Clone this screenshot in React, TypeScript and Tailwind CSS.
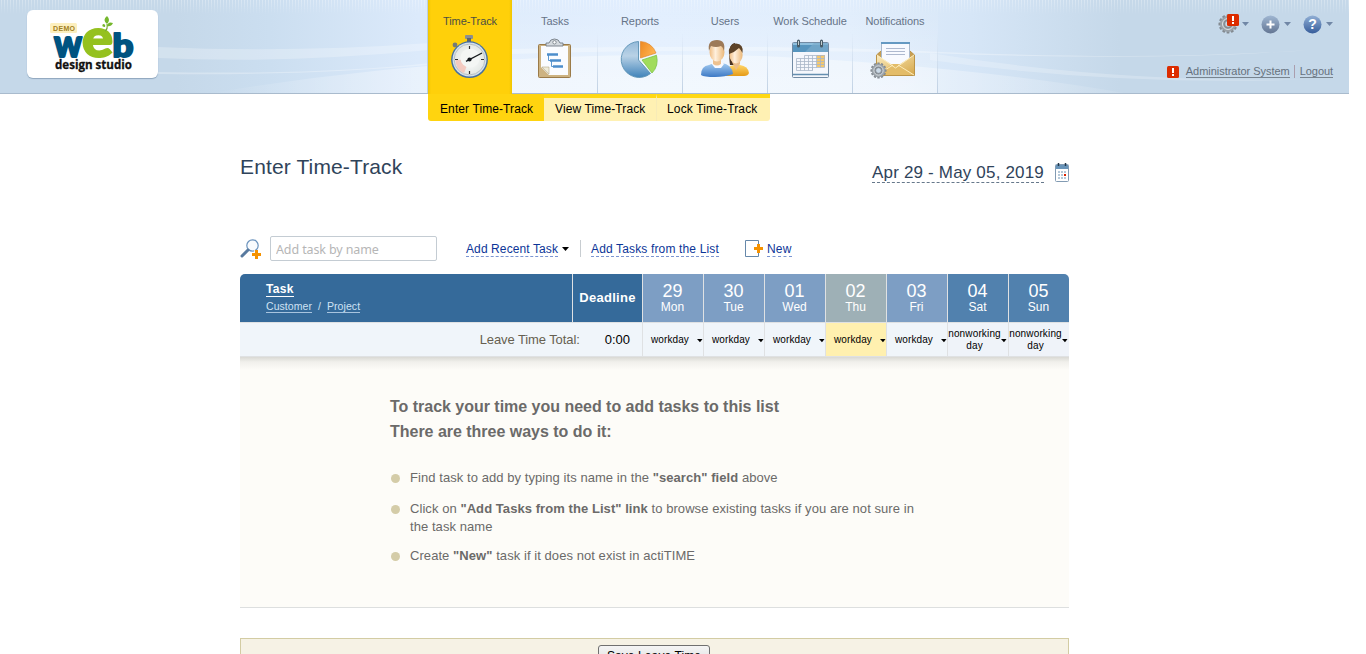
import React from "react";

function HeaderBackdrop() {
  return (
    <svg className="absolute inset-0 h-[94px] w-[1349px]" viewBox="0 0 1349 94" aria-hidden="true">
      <defs>
        <linearGradient id="sky">
          <stop offset="0" stopColor="#c5d8e9" />
          <stop offset="0.13" stopColor="#c5d8e9" />
          <stop offset="0.2" stopColor="#cbdef0" />
          <stop offset="0.31" stopColor="#dceafb" />
          <stop offset="0.48" stopColor="#e1eefe" />
          <stop offset="0.63" stopColor="#e0edfc" />
          <stop offset="0.72" stopColor="#d6e6f7" />
          <stop offset="0.83" stopColor="#c5d8e9" />
          <stop offset="1" stopColor="#c5d8e9" />
        </linearGradient>
        <linearGradient id="hill">
          <stop offset="0" stopColor="#fff" stopOpacity="0" />
          <stop offset="0.25" stopColor="#fff" stopOpacity="0.4" />
          <stop offset="0.75" stopColor="#fff" stopOpacity="0.4" />
          <stop offset="1" stopColor="#fff" stopOpacity="0.05" />
        </linearGradient>
        <linearGradient id="fadeDown" x2="0" y2="1">
          <stop offset="0" stopColor="#fff" stopOpacity="0.3" />
          <stop offset="1" stopColor="#fff" stopOpacity="0" />
        </linearGradient>
        <pattern id="pin" width="3" height="14" patternUnits="userSpaceOnUse">
          <rect x="1" width="1" height="14" fill="url(#fadeDown)" />
        </pattern>
      </defs>
      <rect width="1349" height="94" fill="url(#sky)" />
      <rect width="1349" height="14" fill="url(#pin)" />
      <path d="M158 47Q290 53 430 43V50Q280 64 158 58Z" fill="#fff" fillOpacity="0.25" />
      <path d="M158 72Q320 75 430 63V65Q300 76 158 74Z" fill="#fff" fillOpacity="0.28" />
      <path d="M205 94Q480 48 760 56Q970 66 1130 94Z" fill="url(#hill)" />
      <path d="M512 49Q720 44 900 50Q1140 62 1310 50Q1150 62 930 53Q700 48 512 54Z" fill="#fff" fillOpacity="0.3" />
      <path d="M930 53Q1120 84 1320 79Q1120 87 930 60Z" fill="#fff" fillOpacity="0.22" />
      <rect y="93" width="1349" height="1" fill="#a9bbcd" />
    </svg>
  );
}

function Logo() {
  return (
    <svg className="block overflow-visible" width="131" height="68" viewBox="27 10 131 68">
      <rect x="50" y="23" width="27" height="10" rx="1.5" fill="#fcefbe" />
      <text x="53" y="30.6" fontFamily="'Liberation Sans', Arial, sans-serif" fontWeight="700" fontSize="7" fill="#a18021" textLength="22">DEMO</text>
      <text x="54" y="57" fontFamily="Lato, sans-serif" fontWeight="900" fontSize="37" fill="#005380" stroke="#005380" strokeWidth="2" strokeLinejoin="round" textLength="28" lengthAdjust="spacingAndGlyphs">w</text>
      <text x="112.5" y="57" fontFamily="Lato, sans-serif" fontWeight="900" fontSize="33" fill="#005380" stroke="#005380" strokeWidth="2" strokeLinejoin="round" textLength="21" lengthAdjust="spacingAndGlyphs">b</text>
      <text x="82" y="57" fontFamily="Lato, sans-serif" fontWeight="900" fontSize="53" fill="#95c11f" stroke="#95c11f" strokeWidth="2" textLength="31" lengthAdjust="spacingAndGlyphs">e</text>
      <path d="M105 31Q108 29 107 24" fill="none" stroke="#78a934" strokeWidth="1.2" />
      <path d="M107 24Q102 20 107 16Q111 20 107 24M107 26Q108 21 113 23Q111 27 107 26M105 27Q101 27 103 24Q106 24 105 27" fill="#75b72c" />
      <text x="55" y="68.7" fontFamily="'Open Sans', sans-serif" fontWeight="700" fontSize="12" fill="#111" stroke="#111" strokeWidth="0.3" textLength="77" lengthAdjust="spacingAndGlyphs">design studio</text>
    </svg>
  );
}

function Stopwatch() {
  return (
    <svg width="48" height="48" viewBox="446 34 48 48">
      <defs>
        <radialGradient id="face"><stop offset="0" stopColor="#fff" /><stop offset="1" stopColor="#e4e8e5" /></radialGradient>
      </defs>
      <rect x="465" y="35" width="8" height="4" rx="1" fill="#8b8f91" />
      <rect x="467" y="38" width="4" height="5" fill="#606566" />
      <circle cx="455" cy="45" r="2.4" fill="#747a76" />
      <circle cx="469.5" cy="59.7" r="18.4" fill="#466f9e" />
      <circle cx="469.5" cy="59.5" r="17" fill="#d4e1ec" />
      <circle cx="469.5" cy="59.5" r="15.4" fill="url(#face)" stroke="#b9bfc3" />
      <path d="M469.5 59.5L455.5 60A14 14 0 0 0 464 73Z" fill="#f6bdb2" opacity="0.75" />
      <circle cx="470" cy="58" r="9.6" fill="#f4f6f4" />
      <path d="M469.5 46V49M469.5 71V74M455 59.5H458M481 59.5H484" stroke="#333" strokeWidth="1.2" />
      <path d="M466 61.4L482 53" stroke="#15191c" strokeWidth="1.3" />
      <circle cx="469.5" cy="59.5" r="2.1" fill="#15191c" />
    </svg>
  );
}

function Clipboard() {
  return (
    <svg width="48" height="48" viewBox="531 34 48 48">
      <rect x="538.5" y="44.5" width="32" height="33" rx="1" fill="#cdb382" stroke="#9b7b49" />
      <path d="M541 46H568V75H549L541 67Z" fill="#fafcff" />
      <path d="M542 67H549V74Z" fill="#efebd9" stroke="#a59a77" strokeWidth="0.5" />
      <path d="M546 46V43H549Q550 39 554.500 39Q559 39 560 43H563V46Z" fill="#d5dade" stroke="#737c84" strokeWidth="0.9" />
      <circle cx="554.5" cy="42.300" r="1.700" fill="#fff" stroke="#6d767d" strokeWidth="0.800" />
      <path d="M547 54.500H558M550 60.500H561M553 66.500H563" stroke="#4c8dcb" strokeWidth="2.500" />
      <path d="M548.500 55V60.500H550M551.500 60V66.500H553" fill="none" stroke="#4c8dcb" strokeWidth="0.900" />
    </svg>
  );
}

function PieChart() {
  return (
    <svg width="48" height="48" viewBox="616 34 48 48">
      <defs>
        <linearGradient id="pieBlue" x2="0" y2="1"><stop offset="0" stopColor="#93b9d9" /><stop offset="0.4" stopColor="#b9d2e6" /><stop offset="1" stopColor="#4083ba" /></linearGradient>
        <linearGradient id="pieOrange" x2="1" y2="0.5"><stop offset="0" stopColor="#ee8a22" /><stop offset="1" stopColor="#ffb450" /></linearGradient>
      </defs>
      <path d="M638.500 60V41.500A18 18 0 1 0 650.500 73.500Z" fill="url(#pieBlue)" stroke="#5b92b4" strokeWidth="0.900" />
      <path d="M640.500 58V41.500A17 17 0 0 1 656 53Z" fill="url(#pieOrange)" stroke="#e0872b" strokeWidth="0.700" />
      <path d="M642 60L656.500 55.300Q659 66 652 73Z" fill="#a1dc5c" stroke="#7cc345" strokeWidth="0.800" />
    </svg>
  );
}

function People() {
  return (
    <svg width="52" height="48" viewBox="699 34 52 48">
      <defs>
        <linearGradient id="shirt" x2="0" y2="1"><stop offset="0" stopColor="#a5cdf2" /><stop offset="1" stopColor="#3d79c5" /></linearGradient>
        <linearGradient id="gold" x2="0" y2="1"><stop offset="0" stopColor="#ffd56a" /><stop offset="1" stopColor="#e59a16" /></linearGradient>
        <linearGradient id="skin"><stop offset="0" stopColor="#f0bd82" /><stop offset="0.4" stopColor="#fff0dd" /><stop offset="1" stopColor="#eab778" /></linearGradient>
      </defs>
      <path d="M730 65Q727 44 735 43L738 65Z" fill="#493321" />
      <path d="M726 76V70Q728 66 734 65H740Q748 66 749 73Q748 76 744 76Z" fill="url(#gold)" />
      <path d="M732 62V60H740V64L736 70Z" fill="#e9bd8b" />
      <ellipse cx="736" cy="55" rx="6.600" ry="8.500" fill="url(#skin)" />
      <path d="M729 54Q728 44 736 43.500Q744 44 742.500 53Q741 50 739 48Q735 52 729 54" fill="#5d4328" />
      <path d="M701 75Q701 66 709 65L714 63H721Q732 64 733 74Q725 77 715 77Q704 77 701 75Z" fill="url(#shirt)" />
      <path d="M711 63L714 61H720L724 64L721 68H715Z" fill="#f8faff" />
      <path d="M713 58H721V64Q717 67 713 64Z" fill="#edc18f" />
      <ellipse cx="717" cy="52" rx="7.500" ry="9.500" fill="url(#skin)" />
      <path d="M709 51Q707 40 717 40Q726 40 724 51Q723 47 721 46Q716 48 711 46Z" fill="#9d7a58" />
    </svg>
  );
}

function ScheduleIcon() {
  return (
    <svg width="48" height="48" viewBox="786 34 48 48">
      <rect x="792.500" y="42.500" width="36" height="35" rx="1" fill="#f5f7fc" stroke="#728ba4" />
      <path d="M793 43H828V52H793Z" fill="#5795be" /><path d="M793 43H828V45H793Z" fill="#8fbfdd" />
      <path d="M805 52L814 43H828V52Z" fill="#7baccc" opacity="0.700" />
      <path d="M798.500 41V46M821.500 41V46" stroke="#475b66" strokeWidth="3" strokeLinecap="round" />
      <path d="M798.500 41V45M821.500 41V45" stroke="#c3ced2" />
      <path d="M817 55H825V67H817Z" fill="#f4c86e" />
      <path d="M804.500 55.500H824.500V67.500H812.500V70.500H796.500V58.500H824.500M796.500 61.500H824.500M796.500 64.500H824.500M796.500 67.500H812.500M800.500 58.500V70.500M804.500 55.500V70.500M808.500 55.500V70.500M812.500 55.500V70.500M816.500 55.500V67.500M820.500 55.500V67.500" fill="none" stroke="#aab6c8" strokeWidth="0.800" />
      <path d="M793 74.500H828" stroke="#648eb0" strokeWidth="1.500" />
    </svg>
  );
}

function Gear({ size }: { size: number }) {
  return (
    <svg width={size} height={size} viewBox="-10 -10 20 20">
      <g fill="#838a91">
        {[0, 30, 60, 90, 120, 150].map((angle) => (
          <rect key={angle} x="-1.400" y="-9.500" width="2.800" height="19" rx="0.500" transform={`rotate(${angle})`} />
        ))}
      </g>
      <circle r="6.200" fill="none" stroke="#9aa2a9" strokeWidth="3.500" />
      <circle r="5.500" fill="none" stroke="#dce1e5" strokeWidth="1" />
      <circle r="3.300" fill="#cbdae7" stroke="#7d858c" strokeWidth="0.800" />
    </svg>
  );
}

function EnvelopeIcon() {
  return (
    <span className="relative block h-[48px] w-[48px]">
      <svg width="48" height="48" viewBox="871 34 48 48">
        <defs><linearGradient id="paperGold" x2="1" y2="1"><stop offset="0" stopColor="#fbebbd" /><stop offset="1" stopColor="#d6a84b" /></linearGradient></defs>
        <path d="M876.500 55L881 51H910L914.500 55V75.500H876.500Z" fill="#c79e51" stroke="#bb9448" />
        <path d="M881.500 42.500H909.500V65H881.500Z" fill="#f8faff" stroke="#aab8ca" /><path d="M881 43H910" stroke="#6599c2" strokeWidth="2" />
        <path d="M886 48.500H905M886 51.500H905M886 54.500H905" stroke="#aeb9cf" />
        <path d="M877 55L895.500 67L914 55V75H877Z" fill="url(#paperGold)" />
        <path d="M877 75L892 64H899L914 75Z" fill="#e3bc69" /><path d="M877 55L895.500 68L914 55M877 75L893 65M914 75L898 65" fill="none" stroke="#fff0c4" strokeWidth="0.900" />
      </svg>
      <span className="absolute top-[28px] left-[-1px]"><Gear size={17} /></span>
    </span>
  );
}

const navItems = [
  { label: "Time-Track", icon: <Stopwatch />, active: true },
  { label: "Tasks", icon: <Clipboard /> },
  { label: "Reports", icon: <PieChart /> },
  { label: "Users", icon: <People /> },
  { label: "Work Schedule", icon: <ScheduleIcon /> },
  { label: "Notifications", icon: <EnvelopeIcon /> },
];

function Alert() {
  return (
    <svg className="block" width="12" height="12" viewBox="0 0 12 12">
      <rect width="12" height="12" rx="1.500" fill="#dc2c00" />
      <path d="M5 2H7V7H5ZM5 8H7V10H5Z" fill="#fff" />
    </svg>
  );
}

function Caret({ className = "" }: { className?: string }) {
  return <svg className={className} width="7" height="4" viewBox="0 0 7 4"><path d="M0 0H7L3.500 4Z" fill="currentColor" /></svg>;
}

function RoundIcon({ kind }: { kind: "plus" | "help" }) {
  return (
    <svg width="19" height="19" viewBox="0 0 19 19">
      <defs>
        <linearGradient id="roundplus" x2="0" y2="1"><stop stopColor="#9fb6d2" /><stop offset="1" stopColor="#637693" /></linearGradient>
        <linearGradient id="roundhelp" x2="0" y2="1"><stop stopColor="#91afd5" /><stop offset="1" stopColor="#365d9b" /></linearGradient>
      </defs>
      <circle cx="9.500" cy="9.500" r="9" fill={kind === "plus" ? "url(#roundplus)" : "url(#roundhelp)"} />
      {kind === "plus" ? (
        <path d="M5.500 9.500H13.500M9.500 5.500V13.500" stroke="#fff" strokeWidth="2" />
      ) : (
        <text x="9.500" y="14.300" textAnchor="middle" fill="#fff" fontFamily="'Liberation Sans', Arial, sans-serif" fontWeight="700" fontSize="14">?</text>
      )}
    </svg>
  );
}

function Header() {
  return (
    <header className="relative h-[94px] w-[1349px]">
      <HeaderBackdrop />
      <div className="relative flex h-full">
        <div className="w-[427px] pt-[10px] pl-[27px]">
          <div className="h-[68px] w-[131px] rounded-[6px] bg-white shadow-[0_1px_1px_#8ea6bd]"><Logo /></div>
        </div>
        <nav className="flex h-[93px] border-l border-[#bccfe2] bg-linear-to-b from-white/0 to-white/30">
          {navItems.map((item) => (
            <div key={item.label} className={item.active
              ? "mr-px flex h-[94px] w-[84px] flex-col items-center bg-[#ffd00a] bg-[linear-gradient(90deg,#efc500,transparent_3px,transparent_81px,#efc500)] pt-[14px]"
              : "flex w-[85px] flex-col items-center border-r border-[#bfd0e3] [border-image:linear-gradient(transparent_35%,#bfd0e3)_1] pt-[14px]"}>
              <span className={item.active ? "text-[11px] leading-[14px] tracking-[-0.070px] whitespace-nowrap text-[#4c4f43]" : "text-[11px] leading-[14px] tracking-[-0.070px] whitespace-nowrap text-[#667488]"}>{item.label}</span>
              <span className="mt-[6px] block">{item.icon}</span>
            </div>
          ))}
        </nav>
        <div className="ml-auto flex flex-col items-end pr-[16px]">
          <div className="mt-[13px] flex h-[22px] items-center text-[#7187a6]">
            <span className="relative mr-[4px] block h-[20px] w-[20px]"><Gear size={20} /><span className="absolute top-0 left-[9px]"><Alert /></span></span>
            <Caret className="mr-[12px]" />
            <RoundIcon kind="plus" /><Caret className="mr-[12px] ml-[4px]" />
            <RoundIcon kind="help" /><Caret className="ml-[4px]" />
          </div>
          <div className="mt-[30px] flex items-start text-[11px] leading-[12px] text-[#65717d]">
            <span className="mt-[1px] mr-[7px]"><Alert /></span>
            <span className="border-b border-[#78848f] tracking-[-0.030px] whitespace-nowrap">Administrator System</span>
            <span className="mr-[5px] ml-[4px] h-[13px] border-l border-[#ab9ead]" />
            <span className="border-b border-[#78848f] tracking-[-0.060px]">Logout</span>
          </div>
        </div>
      </div>
    </header>
  );
}

const days = [
  { date: "29", name: "Mon", tone: "bg-[#7d9ec4]", cell: "bg-[#f0f5fa]" },
  { date: "30", name: "Tue", tone: "bg-[#7d9ec4]", cell: "bg-[#f0f5fa]" },
  { date: "01", name: "Wed", tone: "bg-[#7d9ec4]", cell: "bg-[#f0f5fa]" },
  { date: "02", name: "Thu", tone: "bg-[#9eb0b6]", cell: "bg-[#fff0af]" },
  { date: "03", name: "Fri", tone: "bg-[#7d9ec4]", cell: "bg-[#f0f5fa]" },
  { date: "04", name: "Sat", tone: "bg-[#5181ae]", cell: "bg-[#eff3f9]", off: true },
  { date: "05", name: "Sun", tone: "bg-[#5181ae]", cell: "bg-[#eff3f9]", off: true },
];

function Toolbar() {
  return (
    <div className="mt-[53px] flex h-[26px] items-start text-[12px] leading-[14px] text-[#0c3597]">
      <svg className="mt-[3px]" width="21" height="21" viewBox="0 0 21 21">
        <circle cx="12.500" cy="6.500" r="5.700" fill="#f9fbfd" stroke="#6b93bd" strokeWidth="1.200" />
        <path d="M8 11L2 17" stroke="#587a9f" strokeWidth="3" strokeLinecap="round" />
        <path d="M11 15.500H21M16.500 11V20" stroke="#fff" strokeWidth="4.500" /><path d="M12 15.500H21M16.500 11V20" stroke="#f59200" strokeWidth="3" />
      </svg>
      <input className="ml-[9px] h-[25px] w-[167px] rounded-[2px] border border-[#c4ccd3] bg-white px-[5px] pt-[2px] font-['Noto_Sans',sans-serif] text-[12.500px] tracking-[-0.120px] outline-none placeholder:text-[#b6b6b6]" placeholder="Add task by name" />
      <span className="mt-[6px] ml-[29px] border-b border-dashed border-[#7b95d2] tracking-[0.100px]">Add Recent Task</span>
      <Caret className="mt-[11px] ml-[4px] text-black" />
      <span className="mt-[4px] ml-[11px] h-[17px] border-l border-[#c8cdd1]" />
      <span className="mt-[6px] ml-[10px] border-b border-dashed border-[#7b95d2] tracking-[0.150px]">Add Tasks from the List</span>
      <svg className="mt-[4px] ml-[26px]" width="18" height="18" viewBox="0 0 18 18">
        <path d="M13.500 5V.5H.5V16.500H13.500V12" fill="#fff" stroke="#6688aa" /><path d="M9 8.500H18M13.500 4V13" stroke="#f59200" strokeWidth="3" />
      </svg>
      <span className="mt-[6px] ml-[4px] border-b border-dashed border-[#7b95d2] tracking-[0.250px]">New</span>
    </div>
  );
}

function TimeTable() {
  return (
    <div className="mt-[12px] grid grid-cols-[333px_70px_repeat(6,61px)_60px] overflow-hidden rounded-t-[5px]">
      <div className="h-[48px] border-r border-[#dfe1e3] bg-[#356a9a] pt-[8px] pl-[26px] text-[11px] leading-[12px] text-[#cfe2f4]">
        <div className="flex"><span className="border-b border-white text-[12px] leading-[14px] font-bold tracking-[0.300px] text-white">Task</span></div>
        <div className="mt-[3px] flex text-[10.500px]"><span className="border-b border-[#a8c4df] tracking-[0.060px]">Customer</span><span className="mx-[6px]">/</span><span className="border-b border-[#a8c4df] tracking-[0.080px]">Project</span></div>
      </div>
      <div className="flex items-center justify-center border-r border-[#dfe1e3] bg-[#356a9a] pb-[1px] text-[13px] font-bold text-white"><span className="tracking-[0.300px]">Deadline</span></div>
      {days.map((day) => (
        <div key={day.date} className={`flex flex-col items-center border-r border-[#dfe1e3] pt-[8px] pr-[1px] text-white nth-9:border-r-0 ${day.tone}`}>
          <span className="text-[18px] leading-[18px]">{day.date}</span>
          <span className="text-[12px] leading-[14px]">{day.name}</span>
        </div>
      ))}
      <div className="col-span-2 flex h-[35px] items-center justify-end border-y border-r border-[#dfe1e3] bg-[#f0f5fa] pr-[12px] text-[13px]">
        <span className="mr-[25px] tracking-[-0.100px] text-[#665f50]">Leave Time Total:</span>
        <span className="text-[13px] text-black">0:00</span>
      </div>
      {days.map((day) => (
        <div key={day.date} className={`flex items-center border-y border-r border-[#dfe1e3] text-[10px] leading-[12px] text-black last:border-r-0 ${day.cell}`}>
          <span className={day.off ? "w-[53px] text-center tracking-[0.150px]" : "w-[54px] text-center tracking-[0.100px]"}>{day.off ? <>nonworking<br />day</> : "workday"}</span>
          <svg className="mt-[2px]" width="6" height="4" viewBox="0 0 6 4"><path d="M0 0H5.500L3 3.300Z" fill="#000" /></svg>
        </div>
      ))}
    </div>
  );
}

function Guidance() {
  return (
    <section className="h-[251px] border-b border-[#dddfdf] bg-[#fdfcf8] bg-[linear-gradient(#d9d9d4,#f1f0ec_5px,#fdfcf8_13px)] pt-[37px] pl-[150px] text-[#6b6a69]">
      <h2 className="text-[16px] leading-[25px] font-bold tracking-[-0.020px]">To track your time you need to add tasks to this list<br />There are three ways to do it:</h2>
      <ul className="mt-[25px] w-[540px] text-[13px] leading-[18px] tracking-[0.065px]">
        <li className="flex"><i className="mt-[5px] mr-[10px] ml-[1px] h-[9px] w-[9px] rounded-full bg-[#d4cca8]" /><span>Find task to add by typing its name in the <b>"search" field</b> above</span></li>
        <li className="mt-[13px] flex"><i className="mt-[5px] mr-[10px] ml-[1px] h-[9px] w-[9px] rounded-full bg-[#d4cca8]" /><span>Click on <b>"Add Tasks from the List" link</b> to browse existing tasks if you are not sure in<br />the task name</span></li>
        <li className="mt-[11px] flex"><i className="mt-[5px] mr-[10px] ml-[1px] h-[9px] w-[9px] rounded-full bg-[#d4cca8]" /><span>Create <b>"New"</b> task if it does not exist in actiTIME</span></li>
      </ul>
    </section>
  );
}

export default function App() {
  return (
    <div className="h-[654px] overflow-hidden bg-white font-['Liberation_Sans',Arial,sans-serif]">
      <Header />
      <div className="ml-[428px] flex h-[27px] w-[342px] overflow-hidden rounded-b-[3px] text-[12px] text-black">
        <span className="flex w-[116px] items-center bg-[#ffd40f] pt-[2px] pl-[12px] tracking-[0.100px]">Enter Time-Track</span>
        <span className="flex w-[113px] items-center border-t-4 border-r border-t-[#ffd813] border-r-[#f7ebb7] bg-[#fff1b3] pb-[2px] pl-[11px] tracking-[0.120px]">View Time-Track</span>
        <span className="flex w-[113px] items-center border-t-4 border-[#ffd813] bg-[#fff1b3] pb-[2px] pl-[10px] tracking-[0.150px]">Lock Time-Track</span>
      </div>
      <main className="ml-[240px] w-[829px]">
        <div className="flex h-[62px] items-start justify-between text-[#2f435a]">
          <h1 className="mt-[33px] text-[21px] leading-[26px] tracking-[0.130px]">Enter Time-Track</h1>
          <div className="mt-[43px] flex items-start">
            <span className="border-b border-dashed border-[#66788b] text-[17px] leading-[18px] tracking-[0.180px]">Apr 29 - May 05, 2019</span>
            <svg className="mt-[-1px] ml-[11px]" width="14" height="19" viewBox="0 0 14 19">
              <rect x="0.500" y="1.500" width="13" height="17" rx="1" fill="#fff" stroke="#829bb3" /><path d="M1 2H13V6H1Z" fill="#6894b9" />
              <path d="M3.500 0V3M10.500 0V3" stroke="#24394c" strokeWidth="1.500" />
              <path d="M3 9H5M6 9H8M9 9H11M3 12H5M6 12H8M3 15H5M6 15H8M9 15H11" stroke="#b5c9d9" strokeWidth="2" /><path d="M9 12H11" stroke="#dc2100" strokeWidth="2" />
            </svg>
          </div>
        </div>
        <Toolbar />
        <TimeTable />
        <Guidance />
        <div className="mt-[30px] flex h-[50px] items-start border border-[#d3cca3] bg-[#f6f2e5] pt-[6px] pl-[357px]">
          <button className="h-[25px] w-[112px] rounded-[3px] border border-[#707070] bg-linear-to-b from-[#f5f5f5] to-[#d9d9d9] pb-[4px] text-[12px] leading-[14px] tracking-[0.100px] text-black">Save Leave Time</button>
        </div>
      </main>
    </div>
  );
}
